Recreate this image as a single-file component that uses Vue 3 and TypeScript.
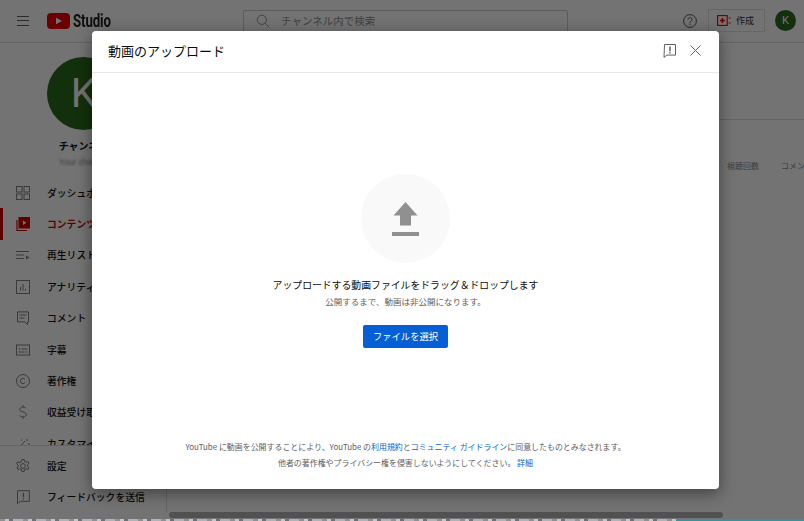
<script setup lang="ts">
interface NavItem { label: string; icon: string; active?: boolean }
const nav: NavItem[] = [
  { label: 'ダッシュボード', icon: 'dash' },
  { label: 'コンテンツ', icon: 'content', active: true },
  { label: '再生リスト', icon: 'list' },
  { label: 'アナリティクス', icon: 'chart' },
  { label: 'コメント', icon: 'comment' },
  { label: '字幕', icon: 'sub' },
  { label: '著作権', icon: 'copy' },
  { label: '収益受け取り', icon: 'money' },
  { label: 'カスタマイズ', icon: 'wand' },
]
const bottom: NavItem[] = [
  { label: '設定', icon: 'gear' },
  { label: 'フィードバックを送信', icon: 'flag' },
]
</script>

<template>
  <div class="page">
    <header class="top">
      <div class="burger"><i></i><i></i><i></i></div>
      <svg class="yt" viewBox="0 0 23 16" width="23" height="16">
        <rect width="23" height="16" rx="4" fill="#e00"/>
        <path d="M9 4.700 15 8 9 11.300Z" fill="#fff"/>
      </svg>
      <span class="studio">Studio</span>
      <div class="search">
        <svg viewBox="0 0 14 14" width="14" height="14" fill="none" stroke="#999" stroke-width="1">
          <circle cx="5.800" cy="5.800" r="4.600"/><path d="M9.200 9.200 13.200 13.200"/>
        </svg>
        <span>チャンネル内で検索</span>
      </div>
      <svg class="help" viewBox="0 0 14 14" width="14" height="14" fill="none" stroke="#555" stroke-width="1">
        <circle cx="7" cy="7" r="6.400"/>
        <path d="M5 5.500C5 3 9 3 9 5.400 9 7 7 7 7 8.700" />
        <path d="M7 9.800v1.200"/>
      </svg>
      <div class="create">
        <svg viewBox="0 0 14 11" width="14" height="11" fill="none" stroke="#e00" stroke-width="1.100">
          <rect x=".6" y=".6" width="9.600" height="9.800"/>
          <path d="M5.400 3v5M3 5.500h5" stroke-width="1.600"/>
          <path d="M11.600 3h2M11.600 8h2" stroke-width="1.200"/>
        </svg>
        <span>作成</span>
      </div>
      <div class="me">K</div>
    </header>

    <div class="body">
      <aside class="side">
        <div class="channel">
          <div class="avatar">K</div>
          <div class="cname">チャンネル</div>
          <div class="chandle">Your channel</div>
        </div>
        <nav class="scroll">
          <div v-for="n in nav" :key="n.label" class="item" :class="{ on: n.active }">
            <svg viewBox="0 0 14 14" width="14" height="14" fill="none" stroke="currentColor" stroke-width="1">
              <template v-if="n.icon === 'dash'">
                <rect x=".5" y=".5" width="5.500" height="5.500"/><rect x="8" y=".5" width="5.500" height="5.500"/>
                <rect x=".5" y="8" width="5.500" height="5.500"/><rect x="8" y="8" width="5.500" height="5.500"/>
              </template>
              <template v-else-if="n.icon === 'content'">
                <path d="M1 3v10.500h10" stroke-width="1.200"/>
                <rect x="3" y=".5" width="10.500" height="10.500" fill="currentColor"/>
                <path d="M7 3.500 10.500 5.800 7 8Z" fill="#fff" stroke="none"/>
              </template>
              <template v-else-if="n.icon === 'list'">
                <path d="M0 3.500h13M0 7h8M0 10.500h8"/><path d="M10 7.500 13.500 9.500 10 11.500Z" fill="currentColor" stroke="none"/>
              </template>
              <template v-else-if="n.icon === 'chart'">
                <rect x=".5" y=".5" width="13" height="13"/><path d="M4.500 10.500V7M7 10.500V4M9.500 10.500V9"/>
              </template>
              <template v-else-if="n.icon === 'comment'">
                <path d="M1.500.9h11v10H11.500v2.600l-2.600-2.600H1.500Z"/><path d="M3.500 4h7M3.500 7h5"/>
              </template>
              <template v-else-if="n.icon === 'sub'">
                <rect x=".5" y="2" width="13" height="10"/><path d="M2.500 6h2M5.500 6h6M2.500 9h6M9.500 9h2"/>
              </template>
              <template v-else-if="n.icon === 'copy'">
                <circle cx="7" cy="7" r="6.500"/><path d="M9 5.400A2.600 2.600 0 1 0 9 8.600"/>
              </template>
              <template v-else-if="n.icon === 'money'">
                <path d="M10 3.200C9 1.800 3.800 1.600 3.800 4.400 3.800 7.500 10.200 6.200 10.200 9.600 10.200 12.300 5 12.200 3.600 10.600M7 0v2M7 12v2"/>
              </template>
              <template v-else-if="n.icon === 'wand'">
                <path d="M1 13 9 4"/><path d="M11 2v2M12 7h2M5 3h1M11 11h1M9.500 9h1" />
              </template>
            </svg>
            <span>{{ n.label }}</span>
          </div>
        </nav>
        <div class="foot">
          <div v-for="n in bottom" :key="n.label" class="item">
            <svg viewBox="0 0 14 14" width="14" height="14" fill="none" stroke="currentColor" stroke-width="1">
              <template v-if="n.icon === 'gear'">
                <circle cx="7" cy="7" r="2.400"/>
                <path d="M5.800.6h2.400l.4 1.900 1.500.7 1.700-.9 1.200 2-1.400 1.300v1.700l1.400 1.300-1.200 2-1.700-.9-1.500.7-.4 1.900H5.800l-.4-1.900-1.500-.7-1.700.9-1.200-2L2 7.800V6.100L.6 4.800l1.200-2 1.700.9L5 3Z"/>
              </template>
              <template v-else>
                <path d="M1.500.7h11.800v10.600H4.200l-2.700 2.400Z"/>
                <path d="M7.400 2.800v4.400M7.400 8.300v1.200" stroke-width="1.300"/>
              </template>
            </svg>
            <span>{{ n.label }}</span>
          </div>
        </div>
      </aside>
      <main class="main">
        <div class="band"></div>
        <div class="cols"><span>視聴回数</span><span>コメント</span></div>
      </main>
    </div>
    <div class="bar"><i></i></div>
    <div class="desk"><i></i><i></i></div>

    <div class="shade"></div>

    <section class="modal">
      <div class="mhead">
        <h1>動画のアップロード</h1>
        <svg viewBox="0 0 13 14" width="13" height="14" fill="none" stroke="#606060" stroke-width="1">
          <path d="M1.500.5h11v10.600H3.800L1 13.400Z"/>
          <path d="M7 2.600v4.600M7 8.300v1.300" stroke="#333" stroke-width="1.200"/>
        </svg>
        <svg class="x" viewBox="0 0 11 11" width="11" height="11" fill="none" stroke="#606060" stroke-width="1">
          <path d="M.5.5l10 10M10.500.5l-10 10"/>
        </svg>
      </div>
      <div class="mbody">
        <div class="disc">
          <svg viewBox="0 0 27 34" width="27" height="34" fill="#909090">
            <path d="M13.500 0 25.500 13.500H19V23.500H8V13.500H1.500Z"/>
            <rect y="30" width="27" height="4" x="0"/>
          </svg>
        </div>
        <p class="lead">アップロードする動画ファイルをドラッグ＆ドロップします</p>
        <p class="sub">公開するまで、動画は非公開になります。</p>
        <button class="pick">ファイルを選択</button>
        <div class="legal">
          <p>YouTube に動画を公開することにより、YouTube の<a>利用規約</a>と<a>コミュニティ ガイドライン</a>に同意したものとみなされます。</p>
          <p>他者の著作権やプライバシー権を侵害しないようにしてください。 <a>詳細</a></p>
        </div>
      </div>
    </section>
  </div>
</template>

<style>
html, body { margin: 0; overflow: hidden; }
</style>

<style scoped>
.page {
  position: relative;
  width: 804px;
  height: 521px;
  overflow: hidden;
  display: flex;
  flex-direction: column;
  background: #fff;
  font-family: "Noto Sans CJK JP", "Liberation Sans", sans-serif;
  color: #0d0d0d;
}
.top {
  flex: none;
  height: 41px;
  display: flex;
  align-items: center;
  padding: 0 8px 1px 17px;
  border-bottom: 1px solid #ddd;
}
.burger { width: 12px; display: flex; flex-direction: column; gap: 3.500px; margin-right: 18px; }
.burger i { display: block; height: 1px; background: #606060; }
.yt { flex: none; margin-right: 2px; }
.studio {
  font: 700 19px/20px "Roboto", sans-serif;
  transform: scaleX(.7);
  transform-origin: 0 50%;
  width: 44px;
  color: #222;
  margin-left: 1px;
  letter-spacing: -.2px;
}
.search {
  width: 325px;
  height: 22px;
  box-sizing: border-box;
  border: 1px solid #ccc;
  border-radius: 2px;
  margin-left: 126px;
  display: flex;
  align-items: center;
  padding-left: 12px;
  gap: 11px;
  font-size: 10.500px;
  color: #909090;
}
.help { margin-left: 115px; flex: none; }
.create {
  margin-left: 11px;
  width: 57px;
  height: 23px;
  box-sizing: border-box;
  border: 1px solid #e2e2e2;
  display: flex;
  align-items: center;
  padding-left: 8px;
  gap: 5px;
  font-size: 9px;
  font-weight: 400;
  color: #333;
}
.create svg { flex: none; }
.me {
  margin-left: 10px;
  width: 21px;
  height: 21px;
  border-radius: 50%;
  background: #2c6a1c;
  color: #fff;
  font: 400 11px/21px "Roboto", sans-serif;
  text-align: center;
}
.body { flex: 1; min-height: 0; display: flex; }
.side {
  flex: none;
  width: 167px;
  box-sizing: border-box;
  border-right: 1px solid #ddd;
  display: flex;
  flex-direction: column;
}
.channel { display: flex; flex-direction: column; align-items: center; width: 167px; padding-top: 14px; }
.avatar {
  width: 73px;
  height: 73px;
  border-radius: 50%;
  background: #2c6a1c;
  color: #fff;
  font: 400 41px/73px "Roboto", sans-serif;
  text-align: center;
}
.cname { font-size: 10px; font-weight: 700; line-height: 14px; margin-top: 9px; color: #111; }
.chandle { font: 8.500px/12px "Liberation Sans", sans-serif; color: #888; filter: blur(1.200px); margin-top: 3px; }
.scroll { height: 280px; overflow: hidden; padding-top: 9px; box-sizing: border-box; border-bottom: 1px solid #ddd; }
.foot { padding-top: 4px; }
.item {
  position: relative;
  display: flex;
  align-items: center;
  height: 31.400px;
  padding-left: 16px;
  gap: 17px;
  font-size: 9.800px;
  font-weight: 500;
  color: #808080;
  white-space: nowrap;
}
.item span { color: #111; }
.foot .item { height: 31px; }
.item.on { color: #cc0000; }
.item.on span { color: #cc0000; font-weight: 700; }
.item.on::before {
  content: "";
  position: absolute;
  left: 0;
  top: 0;
  bottom: 0;
  width: 3px;
  background: #cc0000;
}
.main { flex: 1; min-width: 0; overflow: hidden; }
.band { height: 76px; border-bottom: 1px solid #ddd; }
.cols {
  display: flex;
  gap: 22px;
  padding: 40px 0 0 560px;
  font-size: 8px;
  line-height: 12px;
  color: #888;
  white-space: nowrap;
}
.bar { flex: none; height: 7px; padding-left: 169px; }
.bar i { display: block; width: 554px; height: 6px; border-radius: 3px; background: #b4b4b4; }
.desk { flex: none; height: 2px; display: flex; }
.desk i:first-child {
  flex: none;
  width: 676px;
  background: repeating-linear-gradient(90deg, #8f9092 0 5px, #c3c8cc 5px 9px, #6d7074 9px 13px, #adb3b8 13px 23px);
}
.desk i:last-child { flex: 1; background: #3d8f9e; }
.shade { position: absolute; inset: 0 0 2px 0; background: rgba(0, 0, 0, .55); }
.modal {
  position: absolute;
  left: 92px;
  top: 31px;
  width: 627px;
  height: 458px;
  background: #fff;
  border-radius: 4px;
  box-shadow: 0 4px 16px rgba(0, 0, 0, .45);
  display: flex;
  flex-direction: column;
}
.mhead {
  flex: none;
  height: 42px;
  box-sizing: border-box;
  border-bottom: 1px solid #e8e8e8;
  display: flex;
  align-items: center;
  padding: 0 18px 2px 16px;
}
h1 {
  margin: 0 auto 0 0;
  font-size: 13px;
  font-weight: 400;
  color: #0d0d0d;
}
.x { margin-left: 14px; }
.mbody { flex: 1; display: flex; flex-direction: column; align-items: center; padding-top: 101px; min-height: 0; }
.disc {
  width: 89px;
  height: 89px;
  border-radius: 50%;
  background: #f9f9f9;
  display: flex;
  align-items: center;
  justify-content: center;
}
p { margin: 0; }
.lead { font-size: 9.850px; line-height: 16px; margin-top: 14px; color: #0d0d0d; }
.sub { font-size: 8.500px; line-height: 12px; margin-top: 2px; color: #606060; }
.pick {
  margin-top: 18px;
  width: 85px;
  height: 23px;
  border: 0;
  border-radius: 2px;
  background: #065fd4;
  color: #fff;
  font: 400 9.300px/23px "Noto Sans CJK JP", sans-serif;
  padding: 0;
}
.legal {
  margin-top: auto;
  padding-bottom: 18px;
  text-align: center;
  font-size: 7.950px;
  line-height: 16px;
  color: #606060;
}
.legal p { height: 16px; }
a { color: #065fd4; }
</style>
